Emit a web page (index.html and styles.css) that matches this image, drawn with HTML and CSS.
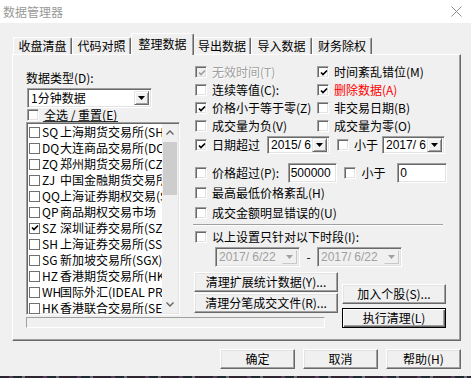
FILE: index.html
```html
<!DOCTYPE html>
<html lang="zh-CN">
<head>
<meta charset="utf-8">
<title>数据管理器</title>
<link rel="stylesheet" href="styles.css">
</head>
<body>
<div class="titlebar">
  <span class="title">数据管理器</span>
  <svg class="close" width="11" height="11" viewBox="0 0 11 11"><path d="M0.5 0.5 L10.5 10.5 M10.5 0.5 L0.5 10.5" stroke="#8c8c8c" stroke-width="1" fill="none"/></svg>
</div>
<div class="tabs">
  <div class="tab">收盘清盘</div>
  <div class="tab">代码对照</div>
  <div class="tab active">整理数据</div>
  <div class="tab">导出数据</div>
  <div class="tab">导入数据</div>
  <div class="tab">财务除权</div>
</div>
<div class="panel">
  <div class="left">
    <div class="label">数据类型(D):</div>
    <div class="combo type">
      <span class="val">1分钟数据</span>
      <span class="dd"><svg width="7" height="4" viewBox="0 0 7 4"><polygon points="0,0 7,0 3.5,4" fill="#000"/></svg></span>
    </div>
    <div class="selall"><span class="box"></span><span class="ul">全选 / 重置(E)</span></div>
    <div class="list">
      <div class="items">
        <div class="item"><span class="lbox"></span><span class="code">SQ</span><span>上海期货交易所(SHFE)</span></div>
        <div class="item"><span class="lbox"></span><span class="code">DQ</span><span>大连商品交易所(DCE)</span></div>
        <div class="item"><span class="lbox"></span><span class="code">ZQ</span><span>郑州期货交易所(CZCE)</span></div>
        <div class="item"><span class="lbox"></span><span class="code">ZJ</span><span>中国金融期货交易所(CFFEX)</span></div>
        <div class="item"><span class="lbox"></span><span class="code">QQ</span><span>上海证券期权交易(SSE)</span></div>
        <div class="item"><span class="lbox"></span><span class="code">QP</span><span>商品期权交易市场</span></div>
        <div class="item"><span class="lbox"><svg width="8" height="8" viewBox="0 0 8 8"><polyline points="1,3.5 3,5.5 7,1.5" fill="none" stroke="#000" stroke-width="1.7"/></svg></span><span class="code">SZ</span><span>深圳证券交易所(SZSE)</span></div>
        <div class="item"><span class="lbox"></span><span class="code">SH</span><span>上海证券交易所(SSE)</span></div>
        <div class="item"><span class="lbox"></span><span class="code">SG</span><span>新加坡交易所(SGX)</span></div>
        <div class="item"><span class="lbox"></span><span class="code">HZ</span><span>香港期货交易所(HKFE)</span></div>
        <div class="item"><span class="lbox"></span><span class="code">WH</span><span>国际外汇(IDEAL PRO)</span></div>
        <div class="item"><span class="lbox"></span><span class="code">HK</span><span>香港联合交易所(SEHK)</span></div>
      </div>
      <div class="vscroll">
        <span class="arrow"><svg width="8" height="5" viewBox="0 0 8 5"><polyline points="0.5,4.5 4,1 7.5,4.5" fill="none" stroke="#606060" stroke-width="1.3"/></svg></span>
        <span class="thumb"></span>
        <span class="track"></span>
        <span class="arrow"><svg width="8" height="5" viewBox="0 0 8 5"><polyline points="0.5,0.5 4,4 7.5,0.5" fill="none" stroke="#606060" stroke-width="1.3"/></svg></span>
      </div>
    </div>
  </div>

  <div class="checks">
    <div class="pair">
      <div class="chk dis"><span class="box on"><svg width="8" height="8" viewBox="0 0 8 8"><polyline points="1,3.5 3,5.5 7,1.5" fill="none" stroke="#a0a0a0" stroke-width="1.7"/></svg></span><span>无效时间(T)</span></div>
      <div class="chk"><span class="box"><svg width="8" height="8" viewBox="0 0 8 8"><polyline points="1,3.5 3,5.5 7,1.5" fill="none" stroke="#000" stroke-width="1.7"/></svg></span><span>时间紊乱错位(M)</span></div>
    </div>
    <div class="pair">
      <div class="chk"><span class="box"></span><span>连续等值(C):</span></div>
      <div class="chk"><span class="box"><svg width="8" height="8" viewBox="0 0 8 8"><polyline points="1,3.5 3,5.5 7,1.5" fill="none" stroke="#000" stroke-width="1.7"/></svg></span><span class="red">删除数据(A)</span></div>
    </div>
    <div class="pair">
      <div class="chk"><span class="box"><svg width="8" height="8" viewBox="0 0 8 8"><polyline points="1,3.5 3,5.5 7,1.5" fill="none" stroke="#000" stroke-width="1.7"/></svg></span><span>价格小于等于零(Z)</span></div>
      <div class="chk"><span class="box"></span><span>非交易日期(B)</span></div>
    </div>
    <div class="pair">
      <div class="chk"><span class="box"></span><span>成交量为负(V)</span></div>
      <div class="chk"><span class="box"></span><span>成交量为零(O)</span></div>
    </div>
    <div class="daterow">
      <span class="box"><svg width="8" height="8" viewBox="0 0 8 8"><polyline points="1,3.5 3,5.5 7,1.5" fill="none" stroke="#000" stroke-width="1.7"/></svg></span>
      <span class="txt w48">日期超过</span>
      <div class="combo date">
        <span class="val num">2015/ 6</span>
        <span class="dd"><svg width="7" height="4" viewBox="0 0 7 4"><polygon points="0,0 7,0 3.5,4" fill="#000"/></svg></span>
      </div>
      <span class="box gap7"></span>
      <span class="txt w28">小于</span>
      <div class="combo date">
        <span class="val num">2017/ 6</span>
        <span class="dd"><svg width="7" height="4" viewBox="0 0 7 4"><polygon points="0,0 7,0 3.5,4" fill="#000"/></svg></span>
      </div>
    </div>
    <div class="pricerow">
      <span class="box"></span>
      <span class="txt w76">价格超过(P):</span>
      <span class="edit num">500000</span>
      <span class="box gap7"></span>
      <span class="txt w36">小于</span>
      <span class="edit num">0</span>
    </div>
    <div class="chk tall"><span class="box"></span><span>最高最低价格紊乱(H)</span></div>
    <div class="chk tall"><span class="box"></span><span>成交金额明显错误的(U)</span></div>
    <div class="sep"></div>
    <div class="chk lim"><span class="box"></span><span>以上设置只针对以下时段(I):</span></div>
    <div class="rangerow">
      <div class="combo range off">
        <span class="val num">2017/ 6/22</span>
        <span class="dd"><svg width="7" height="4" viewBox="0 0 7 4"><polygon points="0,0 7,0 3.5,4" fill="#a0a0a0"/></svg></span>
      </div>
      <span class="dash">-</span>
      <div class="combo range off">
        <span class="val num">2017/ 6/22</span>
        <span class="dd"><svg width="7" height="4" viewBox="0 0 7 4"><polygon points="0,0 7,0 3.5,4" fill="#a0a0a0"/></svg></span>
      </div>
    </div>
  </div>

  <div class="btnl">
    <div class="btn">清理扩展统计数据(Y)...</div>
    <div class="btn">清理分笔成交文件(R)...</div>
  </div>
  <div class="btnr">
    <div class="btn">加入个股(S)...</div>
    <div class="btn def">执行清理(L)</div>
  </div>
  <div class="strip"></div>
</div>
<div class="footer">
  <div class="btn fbtn">确定</div>
  <div class="btn fbtn">取消</div>
  <div class="btn fbtn">帮助(H)</div>
</div>
<div class="desk"></div>
</body>
</html>
```

FILE: styles.css
```css
* { box-sizing: border-box; margin: 0; padding: 0; }
html, body { width: 471px; height: 378px; overflow: hidden; }
body {
  background: #f0f0f0;
  font-family: "Noto Sans CJK SC", sans-serif;
  font-size: 12px;
  line-height: 14px;
  color: #000;
}

/* title bar */
.titlebar {
  height: 23px;
  background: #fff;
  display: flex;
  align-items: center;
  justify-content: space-between;
  padding: 0 9px 0 3px;
}
.title { color: #999; font-size: 12px; }
.close { display: block; }

/* tabs */
.tabs {
  display: flex;
  align-items: flex-end;
  height: 31px;
  padding-left: 13px;
}
.tab {
  height: 17px;
  width: 59px;
  display: flex;
  align-items: center;
  justify-content: center;
  border-top: 1px solid #fff;
  border-left: 1px solid #fff;
  border-right: 1px solid #696969;
  box-shadow: inset -1px 0 #a0a0a0;
  border-radius: 2px 2px 0 0;
  background: #f0f0f0;
}
.tab:nth-child(4) { width: 58px; }
.tab:nth-child(5) { width: 61px; }
.tab:nth-child(6) { width: 60px; }
.tab.active {
  width: 63px;
  height: 22px;
  margin-bottom: -1px;
  margin-right: -1px;
  padding-bottom: 1px;
  position: relative;
  z-index: 1;
}

/* panel */
.panel {
  margin-left: 12px;
  width: 449px;
  border-top: 1px solid #fff;
  border-left: 1px solid #fff;
  border-right: 1px solid #696969;
  border-bottom: 1px solid #696969;
  box-shadow: inset -1px -1px #a0a0a0;
  padding: 8px 0 12px 13px;
  display: grid;
  grid-template-columns: 167px 149px 105px;
  grid-template-rows: 204px 47px 14px;
  grid-template-areas:
    "left checks checks"
    "left btnl btnr"
    "strip strip btnr";
}

/* shared controls */
.box {
  width: 12px;
  height: 12px;
  flex: none;
  background: #fff;
  border: 1px solid;
  border-color: #a0a0a0 #fff #fff #a0a0a0;
  box-shadow: inset 1px 1px #696969, inset -1px -1px #e3e3e3;
  display: flex;
  align-items: center;
  justify-content: center;
  padding: 1px 0 0 1px;
}
.box svg { display: block; }
.dis .box { background: #f0f0f0; }
.dis { color: #a0a0a0; text-shadow: 1px 1px #fff; }
.red { color: #f00; }

.combo {
  display: flex;
  align-items: center;
  justify-content: space-between;
  background: #fff;
  border: 1px solid;
  border-color: #a0a0a0 #fff #fff #a0a0a0;
  box-shadow: inset 1px 1px #696969, inset -1px -1px #e3e3e3;
  padding: 2px 2px 2px 3px;
}
.combo .dd {
  width: 15px;
  align-self: stretch;
  display: flex;
  align-items: center;
  justify-content: center;
  background: #f0f0f0;
  border: 1px solid;
  border-color: #e3e3e3 #696969 #696969 #e3e3e3;
  box-shadow: inset 1px 1px #fff, inset -1px -1px #a0a0a0;
}
.combo .dd svg { display: block; }
.num { font-family: "Liberation Sans", sans-serif; font-size: 12px; }

.edit {
  display: flex;
  align-items: center;
  height: 20px;
  width: 50px;
  background: #fff;
  border: 1px solid;
  border-color: #a0a0a0 #fff #fff #a0a0a0;
  box-shadow: inset 1px 1px #696969, inset -1px -1px #e3e3e3;
  padding-left: 2px;
}

.btn {
  height: 20px;
  display: flex;
  align-items: center;
  justify-content: center;
  background: #f0f0f0;
  border: 1px solid;
  border-color: #fff #696969 #696969 #fff;
  box-shadow: inset -1px -1px #a0a0a0, inset 1px 1px #e3e3e3;
  white-space: nowrap;
}
.btn.def {
  border-color: #000;
  box-shadow: inset 1px 1px #fff, inset -1px -1px #696969, inset -2px -2px #a0a0a0;
}

/* left column */
.left { grid-area: left; display: flex; flex-direction: column; }
.label { margin-top: 8px; height: 14px; }
.combo.type { margin: 3px 0 0 1px; width: 125px; height: 20px; }
.selall {
  margin: 1px 0 0 1px;
  height: 12px;
  display: flex;
  align-items: center;
}
.selall .ul {
  margin-left: 4px;
  line-height: 12px;
  border-bottom: 1px solid #333;
  padding: 0 1px;
}
.list {
  margin-top: 1px;
  width: 154px;
  height: 193px;
  background: #fff;
  border: 1px solid;
  border-color: #a0a0a0 #fff #fff #a0a0a0;
  box-shadow: inset 1px 1px #696969, inset -1px -1px #e3e3e3;
  padding: 1px 1px 0 1px;
  display: flex;
}
.items {
  flex: 1;
  overflow: hidden;
}
.item {
  height: 16px;
  display: flex;
  align-items: center;
  white-space: nowrap;
}
.lbox {
  width: 11px;
  height: 11px;
  flex: none;
  border: 1px solid #707070;
  background: #fff;
  margin: 0 2px 0 1px;
  display: flex;
  align-items: center;
  justify-content: center;
}
.lbox svg { display: block; }
.code { width: 18px; flex: none; }
.vscroll {
  width: 16px;
  flex: none;
  background: #f0f0f0;
  display: flex;
  flex-direction: column;
  margin-bottom: 1px;
}
.vscroll .arrow {
  height: 17px;
  display: flex;
  align-items: center;
  justify-content: center;
}
.vscroll .thumb {
  height: 53px;
  margin: 1px 1px 0;
  background: #cdcdcd;
}
.vscroll .track { flex: 1; }

/* right checks */
.checks { grid-area: checks; display: flex; flex-direction: column; }
.pair { display: grid; grid-template-columns: 122px auto; }
.chk {
  height: 18px;
  display: flex;
  align-items: center;
  white-space: nowrap;
}
.chk .box { margin: 0 5px 0 2px; }
.chk.tall { height: 20px; }
.daterow, .pricerow, .rangerow {
  height: 20px;
  display: flex;
  align-items: center;
  white-space: nowrap;
}
.daterow > .box:first-child, .pricerow > .box:first-child { margin: 0 5px 0 2px; }
.pricerow { margin-top: 8px; }
.gap7 { margin: 0 5px 0 7px; }
.txt.w48 { width: 55px; }
.txt.w28 { width: 28px; }
.txt.w76 { width: 76px; }
.txt.w36 { width: 36px; }
.combo.date { width: 63px; height: 18px; padding: 1px 2px 1px 3px; }
.sep {
  margin: 1px 4px 0 0;
  height: 2px;
  border-top: 1px solid #a0a0a0;
  border-bottom: 1px solid #fff;
}
.chk.lim { margin-top: 2px; }
.rangerow { margin-top: 1px; padding-left: 22px; }
.combo.range { width: 85px; height: 20px; }
.combo.off { background: #f0f0f0; color: #a0a0a0; }
.combo.off .dd {
  border-color: #f0f0f0 #c8c8c8 #c8c8c8 #f0f0f0;
  box-shadow: none;
}
.dash { width: 17px; text-align: center; }

/* buttons inside panel */
.btnl {
  grid-area: btnl;
  margin: 5px 0 0 1px;
  width: 144px;
  display: flex;
  flex-direction: column;
  gap: 1px;
}
.btnr {
  grid-area: btnr;
  align-self: end;
  width: 104px;
  display: flex;
  flex-direction: column;
  gap: 4px;
}
.strip {
  grid-area: strip;
  margin-top: 3px;
  width: 299px;
  height: 11px;
  border: 1px solid;
  border-color: #a0a0a0 #fff #fff #a0a0a0;
}

/* footer */
.footer {
  margin-top: 8px;
  display: flex;
  justify-content: flex-end;
  gap: 8px;
  padding-right: 10px;
}
.fbtn { width: 75px; }

.desk {
  margin-top: 7px;
  height: 2px;
  background: repeating-linear-gradient(90deg, #2a2433 0 9px, #5a3a5e 9px 13px, #1e2a30 13px 22px, #6a6a7a 22px 25px, #30242e 25px 34px);
}
```
